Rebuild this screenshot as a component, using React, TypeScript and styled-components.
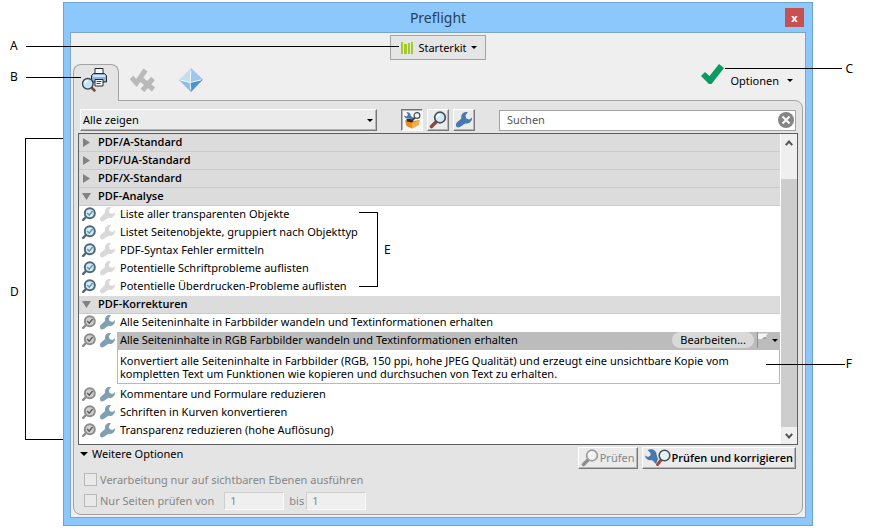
import React from 'react';
import styled, { createGlobalStyle, css } from 'styled-components';

const GlobalStyle = createGlobalStyle`
  *, *::before, *::after { box-sizing: border-box; }
  body {
    margin: 0;
    background: #fff;
    color: #000;
    font-family: 'Noto Sans', 'Open Sans', sans-serif;
    font-size: 11px;
    line-height: 18px;
  }
  button, input, select {
    font: inherit;
    color: inherit;
    margin: 0;
    padding: 0;
    border: 0;
    background: none;
    border-radius: 0;
  }
  ul { list-style: none; margin: 0; padding: 0; }
  svg { display: block; flex: none; }
`;

/* ---------- page and window ---------- */

const Page = styled.div`
  position: relative;
  padding: 2px 62px 5px 63px;
`;

const Window = styled.section`
  border: 1px solid #6fa3cf;
  background: #8cc8fb;
  padding: 0 6px 7px;
`;

const TitleBar = styled.header`
  display: grid;
  grid-template-columns: 20px 1fr 20px;
  align-items: center;
  height: 29px;
  padding: 0 1px;
`;

const Title = styled.h1`
  grid-column: 2;
  margin: 0;
  text-align: center;
  font-size: 14px;
  font-weight: 400;
  line-height: 20px;
  color: #26415a;
`;

const CloseButton = styled.button`
  width: 19px;
  height: 19px;
  background: #c75050;
  color: #fff;
  font-weight: 700;
  line-height: 16px;
`;

const Client = styled.div`
  border: 1px solid #7ba6c9;
  background: #efefef;
  padding: 2px;
`;

const LibraryRow = styled.div`
  display: flex;
  justify-content: center;
`;

const LibraryButton = styled.button`
  display: flex;
  align-items: center;
  gap: 4px;
  height: 25px;
  padding: 0 8px 0 10px;
  border: 1px solid #a3a3a3;
  background: #e5e5e5;
`;

const TabRow = styled.div`
  display: flex;
  align-items: flex-end;
  height: 41px;
  margin-bottom: -1px;
`;

const Tab = styled.button<{ $active?: boolean }>`
  position: relative;
  display: flex;
  align-items: flex-start;
  justify-content: center;
  width: 48px;
  height: 37px;
  padding-top: 4px;
  ${p =>
    p.$active &&
    css`
      justify-content: flex-start;
      width: 46px;
      padding: 3px 0 0 7px;
      border: 1px solid #a3a3a3;
      border-bottom: 0;
      border-radius: 8px 8px 0 0;
      background: #e4e4e4;
      z-index: 1;
    `}
`;

const OptionsArea = styled.div`
  display: flex;
  align-items: center;
  gap: 6px;
  height: 37px;
  margin-left: auto;
  padding-right: 10px;
`;

const CheckMark = styled.div`
  align-self: flex-start;
`;

const OptionsButton = styled.button`
  display: flex;
  align-items: center;
  gap: 8px;
  margin-bottom: 4px;
`;

const Panel = styled.main`
  border: 1px solid #a3a3a3;
  border-radius: 0 8px 8px 8px;
  background: #e4e4e4;
  padding: 8px 4px 4px;
`;

/* ---------- filter bar ---------- */

const FilterBar = styled.div`
  display: grid;
  grid-template-columns: 1fr auto 1fr;
  align-items: center;
  height: 22px;
  margin: 0 2px 2px;
`;

const raised = css`
  border: 1px solid;
  border-color: #fff #777 #777 #fff;
  box-shadow: inset -1px -1px #b4b4b4;
  background: #ebebeb;
`;

const SelectBox = styled.div`
  display: grid;
  align-items: center;
  height: 22px;
  & > * { grid-area: 1 / 1; }
  & > svg { justify-self: end; margin-right: 4px; pointer-events: none; }
`;

const Select = styled.select`
  ${raised}
  appearance: none;
  width: 100%;
  height: 22px;
  padding-left: 2px;
`;

const ToggleGroup = styled.div`
  display: flex;
  gap: 4px;
  margin: 0 24px;
`;

const ToggleButton = styled.button<{ $pressed?: boolean }>`
  ${raised}
  display: flex;
  align-items: center;
  justify-content: center;
  width: 22px;
  height: 22px;
  ${p =>
    p.$pressed &&
    css`
      border-color: #777 #fff #fff #777;
      box-shadow: inset 1px 1px #b4b4b4;
      background: #f6f6f6;
    `}
`;

const SearchBox = styled.div`
  display: flex;
  align-items: center;
  height: 21px;
  padding: 0 1px 0 7px;
  border: 1px solid #a3a3a3;
  background: #fff;
`;

const SearchInput = styled.input`
  flex: 1;
  min-width: 0;
  outline: 0;
  &::placeholder { color: #555; opacity: 1; }
`;

const ClearButton = styled.button``;

/* ---------- profile list ---------- */

const ListFrame = styled.div`
  display: flex;
  border: 1px solid #5e5e5e;
  background: #fff;
`;

const Profiles = styled.div`
  flex: 1;
  min-width: 0;
  padding-bottom: 4px;
  border-right: 1px solid #fff;
`;

const Group = styled.section`
  position: relative;
`;

const GroupHeader = styled.button`
  display: flex;
  align-items: center;
  gap: 7px;
  width: 100%;
  height: 18px;
  padding: 0 3px 1px;
  border-bottom: 1px solid #cbcbcb;
  background: #dcdcdc;
  font-family: 'Open Sans', sans-serif;
  font-weight: 600;
`;

const Item = styled.li`
  display: flex;
  align-items: center;
  height: 18px;
  padding-left: 3px;
  white-space: nowrap;
`;

const ItemIcons = styled.span`
  display: flex;
  gap: 4px;
  width: 35px;
  padding-bottom: 2px;
`;

const ItemLabel = styled.span<{ $selected?: boolean }>`
  display: flex;
  flex: 1;
  align-items: center;
  height: 18px;
  padding: 0 0 2px 3px;
  background: ${p => (p.$selected ? '#bcbcbc' : 'transparent')};
`;

const EditButton = styled.button`
  height: 16px;
  margin-left: auto;
  padding: 0 8px;
  border-radius: 8px;
  background: #d9d9d9;
  line-height: 16px;
`;

const FlagButton = styled.button`
  display: flex;
  align-items: center;
  gap: 3px;
  margin: 0 2px 0 3px;
`;

const Description = styled.p`
  margin: 0 0 2px 38px;
  padding: 4px 48px 3px 2px;
  border: 1px solid #b8b8b8;
  border-top: 0;
  line-height: 13px;
`;

const ScrollBar = styled.div`
  display: flex;
  flex-direction: column;
  width: 16px;
  background: #efefef;
`;

const ScrollButton = styled.button`
  display: flex;
  align-items: center;
  justify-content: center;
  height: 17px;
`;

const ScrollThumb = styled.div`
  flex: 1;
  margin-top: 28px;
  background: #cdcdcd;
`;

/* ---------- footer ---------- */

const Footer = styled.footer`
  display: flex;
  justify-content: space-between;
  align-items: flex-start;
  margin: 1px 2px 0;
`;

const MoreOptions = styled.div`
  display: flex;
  flex-direction: column;
`;

const Disclosure = styled.button`
  display: flex;
  align-items: center;
  gap: 4px;
  height: 16px;
  margin-bottom: 8px;
`;

const OptionRow = styled.div`
  display: flex;
  align-items: center;
  height: 19px;
  margin-bottom: 2px;
  padding-left: 4px;
  color: #868686;
  &:last-child { margin: 0; }
`;

const OptionLabel = styled.label`
  display: flex;
  align-items: center;
  gap: 3px;
  margin-right: 8px;
`;

const CheckBox = styled.input`
  appearance: none;
  width: 13px;
  height: 13px;
  border: 1px solid #b9b9b9;
  background: #e9e9e9;
`;

const PageInput = styled.input`
  width: 60px;
  height: 18px;
  margin: 0 5px 0 2px;
  padding-left: 5px;
  border: 1px solid;
  border-color: #cfcfcf #fafafa #fafafa #cfcfcf;
  background: #efefef;
`;

const Actions = styled.div`
  display: flex;
  gap: 4px;
  margin-top: 1px;
`;

const ActionButton = styled.button<{ $primary?: boolean }>`
  ${raised}
  display: flex;
  align-items: center;
  gap: 1px;
  height: 22px;
  padding: 0 2px;
  ${p =>
    p.$primary
      ? css`
          color: #000;
          font-family: 'Open Sans', sans-serif;
          font-weight: 600;
        `
      : css`
          color: #868686;
        `}
`;

/* ---------- callouts lying over the window ---------- */

const Letter = styled.span`
  position: absolute;
  z-index: 2;
  font-size: 12px;
  line-height: 16px;
`;

const Rule = styled.span`
  position: absolute;
  z-index: 2;
  height: 1px;
  background: #000;
`;

const LetterA = styled(Letter)`left: 10px; top: 38px;`;
const RuleA = styled(Rule)`left: 26px; right: calc(50% + 39px); top: 46px;`;
const LetterB = styled(Letter)`left: 10px; top: 69px;`;
const RuleB = styled(Rule)`left: 26px; width: 55px; top: 77px;`;
const LetterC = styled(Letter)`right: 22px; top: 61px;`;
const RuleC = styled(Rule)`right: 33px; width: 117px; top: 68px;`;
const LetterD = styled(Letter)`left: 10px; top: 284px;`;
const BracketD = styled.span`
  position: absolute;
  left: 25px;
  top: 138px;
  width: 38px;
  height: 302px;
  border: solid #000;
  border-width: 1px 0 1px 1px;
`;
const BracketE = styled.span`
  position: absolute;
  left: 280px;
  top: 24px;
  width: 19px;
  height: 75px;
  border: solid #000;
  border-width: 1px 1px 1px 0;
`;
const LetterE = styled(Letter)`left: 305px; top: 54px;`;
const LetterF = styled(Letter)`right: 23px; top: 356px;`;
const RuleF = styled(Rule)`right: 30px; width: 79px; top: 364px;`;

/* ---------- icons ---------- */

const Caret = ({ size = 6 }: { size?: number }) => (
  <svg width={size} height={size / 2} viewBox="0 0 6 3" aria-hidden="true">
    <path d="M0 0h6L3 3z" fill="#000" />
  </svg>
);

const Triangle = ({ open }: { open?: boolean }) => (
  <svg width="9" height="9" viewBox="0 0 9 9" aria-hidden="true">
    <path d={open ? 'M0 1h9L4.5 8z' : 'M1 0v9l7-4.5z'} fill="#828282" />
  </svg>
);

const WRENCH =
  'M11 .2C7-.6 4.400 2.300 5 6L.8 9.800C-.6 11.400-.2 13.900 1.500 14.400 3.400 15 6.200 12 8.800 10.800 12.200 11.400 15.200 9 15 5.200L12.400 7 9.600 6 8.900 3.200z';

const Wrench = ({ color, size = 15 }: { color: string; size?: number }) => (
  <svg width={size} height={size} viewBox="0 0 15 15" aria-hidden="true">
    <path d={WRENCH} fill={color} />
  </svg>
);

const CheckLens = ({ active }: { active: boolean }) => (
  <svg width="14" height="14" viewBox="0 0 14 14" aria-hidden="true">
    <path d="M1.200 12.800L4 10" stroke={active ? '#4f6877' : '#8b8b8b'} strokeWidth="2.400" strokeLinecap="round" />
    <circle cx="7.800" cy="6.200" r="5" fill={active ? '#d6ebf3' : '#cfcfcf'} stroke={active ? '#4f6877' : '#8d8d8d'} strokeWidth="2" />
    <path d="M5.200 6l2 2.200 3.400-4.200" fill="none" stroke={active ? '#5f97ad' : '#5e5e5e'} strokeWidth="1.500" />
  </svg>
);

const Lens = ({ gray, size = 18 }: { gray?: boolean; size?: number }) => (
  <svg width={size} height={size} viewBox="0 0 18 18" aria-hidden="true">
    <path d="M2.500 15.500l4.500-4.500" stroke={gray ? '#8e8e8e' : '#8d4940'} strokeWidth="3.600" strokeLinecap="round" />
    <circle cx="11" cy="6.500" r="5.300" fill={gray ? '#f2f2f2' : '#d4ebf5'} stroke={gray ? '#9c9c9c' : '#454d55'} strokeWidth="1.700" />
    <path d="M8 6.500a3 3 0 0 1 3-3" fill="none" stroke="#fff" strokeWidth="2" />
  </svg>
);

const BooksIcon = () => (
  <svg width="13" height="12" viewBox="0 0 13 12" aria-hidden="true">
    <path d="M0 0h2v12H0zM3 2h3v10H3zM7 1h2v11H7zM10 0h2v12h-2z" fill="#a2cb2b" />
  </svg>
);

const PrinterLensIcon = () => (
  <svg width="27" height="24" viewBox="0 0 27 24" aria-hidden="true">
    <path d="M14 .5h8V6h-8z" fill="#fff" stroke="#24292f" />
    <path d="M10.500 7.500l2-2h11l2 2V14h-15z" fill="#8fb4dc" stroke="#24292f" />
    <path d="M12 7h12v2H12z" fill="#d2e4f6" />
    <path d="M14 11.500h8V18h-8z" fill="#fff" stroke="#24292f" />
    <path d="M15.500 13.500h5M15.500 15.500h4" stroke="#444" />
    <path d="M10.500 19.500l3 3" stroke="#7b4b42" strokeWidth="2.500" strokeLinecap="round" />
    <circle cx="6.800" cy="15.800" r="5.300" fill="#c6e4f7" stroke="#3d444c" strokeWidth="1.400" />
    <path d="M4 15.500a3 3 0 0 1 2.800-2.800" fill="none" stroke="#fff" strokeWidth="1.400" />
  </svg>
);

const CheckCrossIcon = () => (
  <svg width="26" height="24" viewBox="0 0 26 24" aria-hidden="true">
    <path d="M1.500 9.500l5 5.500L15.500 2" fill="none" stroke="#b9b9b9" strokeWidth="5" />
    <path d="M11.500 11.500l12 10M23 10.500l-10.500 12" fill="none" stroke="#b9b9b9" strokeWidth="5" />
  </svg>
);

const CrystalIcon = () => (
  <svg width="24" height="24" viewBox="0 0 24 24" aria-hidden="true">
    <path d="M12 0L0 12l11 2.500z" fill="#c6dcef" />
    <path d="M12 0l12 11.500-13 3z" fill="#9fc6ea" />
    <path d="M0 12l11 2.500 1 9.500z" fill="#8dbce6" />
    <path d="M24 11.500l-13 3 1 9.500z" fill="#4f92d2" />
    <path d="M2 12.200l9 2.300 11-2.600M11.900 3l-.9 11.500.8 7" fill="none" stroke="#f2f9ff" />
  </svg>
);

const GreenCheckIcon = () => (
  <svg width="23" height="21" viewBox="0 0 23 21" aria-hidden="true">
    <path d="M0 12l4-4 4.500 4L18 0l5 4L10.500 20H8z" fill="#0b9a62" />
  </svg>
);

const ToolboxIcon = () => (
  <svg width="17" height="17" viewBox="0 0 17 17" aria-hidden="true">
    <path d="M2.500 0C5 0 7 1.500 6.800 4L10 6.500 8.500 8.500 5.500 6.500C3 7.500.5 6 0 3.500L2.500 4.500 4 3z" fill="#4779ae" />
    <path d="M8.500 8l2.500-2.500" stroke="#5e3a30" strokeWidth="2" />
    <circle cx="13" cy="3.500" r="2.900" fill="#edf7fb" stroke="#474f57" strokeWidth="1.200" />
    <path d="M1 8l6 1.500L15.500 8l-1 5L8 16.500l-5.500-2.500z" fill="#e88a1c" />
    <path d="M7.500 11.500L16 8l-1.500 5L8 16.500z" fill="#f4ae48" />
    <path d="M2.500 7h4l3 1.500-1.500 2-5-1z" fill="#332a22" />
  </svg>
);

const ClearIcon = () => (
  <svg width="16" height="16" viewBox="0 0 16 16" aria-hidden="true">
    <circle cx="8" cy="8" r="8" fill="#858585" />
    <path d="M4.500 4.500l7 7M11.500 4.500l-7 7" stroke="#fff" strokeWidth="1.800" />
  </svg>
);

const Chevron = ({ down }: { down?: boolean }) => (
  <svg width="8" height="6" viewBox="0 0 8 6" aria-hidden="true">
    <path d={down ? 'M.8.800L4 4.500 7.200.8' : 'M.8 5.200L4 1.500l3.200 3.700'} fill="none" stroke="#555" strokeWidth="2" />
  </svg>
);

const FlagIcon = () => (
  <svg width="12" height="16" viewBox="0 0 12 16" aria-hidden="true">
    <path d="M.5 0v16" stroke="#8c8c8c" />
    <path d="M1 1.500h10l-2 2.500 2 3H1z" fill="#f4f4f4" />
    <path d="M5 7l2-2h2l2 2z" fill="#a2a2a2" />
  </svg>
);

const FixIcon = () => (
  <svg width="26" height="18" viewBox="0 0 26 18" aria-hidden="true">
    <path d="M2.500 1c4-2 9 0 9 4.500L13 10l-2 5-4-4C3.500 12 .5 10 0 6.500L3 8l2.500-1.500V4z" fill="#4779ae" />
    <path d="M12.500 15.500l4-5" stroke="#a04a3b" strokeWidth="3" strokeLinecap="round" />
    <circle cx="19.500" cy="6.500" r="5.300" fill="#e4f3f9" stroke="#454d55" strokeWidth="1.500" />
  </svg>
);

/* ---------- data ---------- */

const closedGroups = ['PDF/A-Standard', 'PDF/UA-Standard', 'PDF/X-Standard'];

const analysisItems = [
  'Liste aller transparenten Objekte',
  'Listet Seitenobjekte, gruppiert nach Objekttyp',
  'PDF-Syntax Fehler ermitteln',
  'Potentielle Schriftprobleme auflisten',
  'Potentielle Überdrucken-Probleme auflisten',
];

const fixups = [
  { name: 'Alle Seiteninhalte in Farbbilder wandeln und Textinformationen erhalten' },
  {
    name: 'Alle Seiteninhalte in RGB Farbbilder wandeln und Textinformationen erhalten',
    description:
      'Konvertiert alle Seiteninhalte in Farbbilder (RGB, 150 ppi, hohe JPEG Qualität) und erzeugt eine unsichtbare Kopie vom kompletten Text um Funktionen wie kopieren und durchsuchen von Text zu erhalten.',
  },
  { name: 'Kommentare und Formulare reduzieren' },
  { name: 'Schriften in Kurven konvertieren' },
  { name: 'Transparenz reduzieren (hohe Auflösung)' },
];

export default function App() {
  return (
    <Page>
      <GlobalStyle />
      <Window>
        <TitleBar>
          <Title>Preflight</Title>
          <CloseButton aria-label="Schließen">x</CloseButton>
        </TitleBar>
        <Client>
          <LibraryRow>
            <LibraryButton>
              <BooksIcon />
              Starterkit
              <Caret />
            </LibraryButton>
          </LibraryRow>
          <TabRow>
            <Tab $active aria-label="Profile"><PrinterLensIcon /></Tab>
            <Tab aria-label="Ergebnisse"><CheckCrossIcon /></Tab>
            <Tab aria-label="Standards"><CrystalIcon /></Tab>
            <OptionsArea>
              <CheckMark><GreenCheckIcon /></CheckMark>
              <OptionsButton>
                Optionen
                <Caret />
              </OptionsButton>
            </OptionsArea>
          </TabRow>
          <Panel>
            <FilterBar>
              <SelectBox>
                <Select aria-label="Profile anzeigen" defaultValue="all">
                  <option value="all">Alle zeigen</option>
                </Select>
                <Caret />
              </SelectBox>
              <ToggleGroup>
                <ToggleButton $pressed aria-label="Alle"><ToolboxIcon /></ToggleButton>
                <ToggleButton aria-label="Prüfungen"><Lens /></ToggleButton>
                <ToggleButton aria-label="Korrekturen"><Wrench color="#4779ae" size={16} /></ToggleButton>
              </ToggleGroup>
              <SearchBox>
                <SearchInput type="text" placeholder="Suchen" aria-label="Suchen" />
                <ClearButton aria-label="Suche löschen"><ClearIcon /></ClearButton>
              </SearchBox>
            </FilterBar>

            <ListFrame>
              <Profiles>
                {closedGroups.map(name => (
                  <Group key={name}>
                    <GroupHeader aria-expanded={false}><Triangle />{name}</GroupHeader>
                  </Group>
                ))}
                <Group>
                  <GroupHeader aria-expanded><Triangle open />PDF-Analyse</GroupHeader>
                  <ul>
                    {analysisItems.map(name => (
                      <Item key={name}>
                        <ItemIcons><CheckLens active /><Wrench color="#d9d9d9" /></ItemIcons>
                        <ItemLabel>{name}</ItemLabel>
                      </Item>
                    ))}
                  </ul>
                  <BracketE />
                  <LetterE>E</LetterE>
                </Group>
                <Group>
                  <GroupHeader aria-expanded><Triangle open />PDF-Korrekturen</GroupHeader>
                  <ul>
                    {fixups.map(({ name, description }) => (
                      <React.Fragment key={name}>
                        <Item>
                          <ItemIcons><CheckLens active={false} /><Wrench color="#7ea0b2" /></ItemIcons>
                          <ItemLabel $selected={!!description}>
                            {name}
                            {description && (
                              <>
                                <EditButton>Bearbeiten...</EditButton>
                                <FlagButton aria-label="Markierung"><FlagIcon /><Caret /></FlagButton>
                              </>
                            )}
                          </ItemLabel>
                        </Item>
                        {description && <li><Description>{description}</Description></li>}
                      </React.Fragment>
                    ))}
                  </ul>
                </Group>
              </Profiles>
              <ScrollBar>
                <ScrollButton aria-label="Nach oben"><Chevron /></ScrollButton>
                <ScrollThumb />
                <ScrollButton aria-label="Nach unten"><Chevron down /></ScrollButton>
              </ScrollBar>
            </ListFrame>

            <Footer>
              <MoreOptions>
                <Disclosure aria-expanded><Caret size={8} />Weitere Optionen</Disclosure>
                <OptionRow>
                  <OptionLabel>
                    <CheckBox type="checkbox" disabled />
                    Verarbeitung nur auf sichtbaren Ebenen ausführen
                  </OptionLabel>
                </OptionRow>
                <OptionRow>
                  <OptionLabel>
                    <CheckBox type="checkbox" disabled />
                    Nur Seiten prüfen von
                  </OptionLabel>
                  <PageInput type="text" defaultValue="1" disabled aria-label="Von Seite" />
                  <label htmlFor="page-to">bis</label>
                  <PageInput id="page-to" type="text" defaultValue="1" disabled />
                </OptionRow>
              </MoreOptions>
              <Actions>
                <ActionButton disabled><Lens gray />Prüfen</ActionButton>
                <ActionButton $primary><FixIcon />Prüfen und korrigieren</ActionButton>
              </Actions>
            </Footer>
          </Panel>
        </Client>
      </Window>

      <LetterA>A</LetterA><RuleA />
      <LetterB>B</LetterB><RuleB />
      <RuleC /><LetterC>C</LetterC>
      <LetterD>D</LetterD><BracketD />
      <RuleF /><LetterF>F</LetterF>
    </Page>
  );
}
